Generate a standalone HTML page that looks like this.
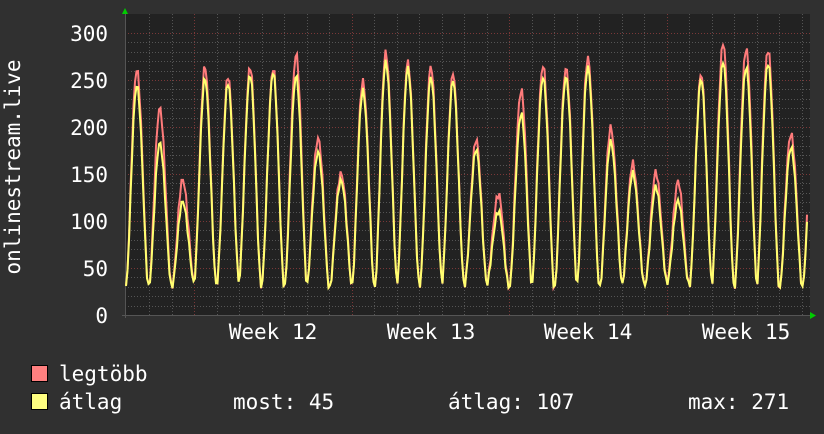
<!DOCTYPE html>
<html><head><meta charset="utf-8"><style>
body{margin:0;background:#303030;width:824px;height:430px;overflow:hidden;font-family:"DejaVu Sans Mono","Liberation Mono",monospace;color:#fff}
svg text{font-family:"DejaVu Sans Mono","Liberation Mono",monospace;fill:#fff}
</style></head><body>
<svg id="s" width="824" height="430" xmlns="http://www.w3.org/2000/svg">
<rect x="0" y="0" width="824" height="430" fill="#303030"/>
<rect x="125" y="14" width="685" height="302" fill="#222"/>
<g id="grid"></g>
<g id="data"></g>
<g font-size="21">
<text x="108" y="41" text-anchor="end">300</text>
<text x="108" y="88" text-anchor="end">250</text>
<text x="108" y="135" text-anchor="end">200</text>
<text x="108" y="182" text-anchor="end">150</text>
<text x="108" y="229" text-anchor="end">100</text>
<text x="108" y="276" text-anchor="end">50</text>
<text x="108" y="323" text-anchor="end">0</text>
<text x="273" y="339" text-anchor="middle">Week 12</text>
<text x="431" y="339" text-anchor="middle">Week 13</text>
<text x="588" y="339" text-anchor="middle">Week 14</text>
<text x="746" y="339" text-anchor="middle">Week 15</text>
<text transform="translate(20,167) rotate(-90)" text-anchor="middle">onlinestream.live</text>
<text x="59" y="381">legtöbb</text>
<text x="59" y="409">átlag</text>
<text x="233" y="409">most: 45</text>
<text x="448" y="409">átlag: 107</text>
<text x="688" y="409">max: 271</text>
</g>
<rect x="31.5" y="365.5" width="16" height="16" fill="#ff8080" stroke="#000"/>
<rect x="31.5" y="393.5" width="16" height="16" fill="#ffff80" stroke="#000"/>
<polygon points="122,14 128,14 125,8" fill="#0c0"/>
<polygon points="810,312 810,319 816,315.5" fill="#0c0"/>
</svg>
<script>
var NS="http://www.w3.org/2000/svg",g=document.getElementById('grid'),d=document.getElementById('data');
function ln(p,x1,y1,x2,y2,c,da){var l=document.createElementNS(NS,'line');l.setAttribute('x1',x1);l.setAttribute('y1',y1);l.setAttribute('x2',x2);l.setAttribute('y2',y2);l.setAttribute('stroke',c);l.setAttribute('stroke-width',1);if(da)l.setAttribute('stroke-dasharray',da);p.appendChild(l);}
for(var v=10;v<=300;v+=10){var y=Math.round(315-v*0.94)+0.5;ln(g,125,y,810,y,v%50?'#555':'#7a3838','1,2');}
for(var x=149;x<810;x+=22.5){var xx=Math.round(x)+0.5;var maj=[194,352,509,667].some(function(m){return Math.abs(m-x)<3});ln(g,xx,14,xx,316,maj?'#7a3838':'#555','1,2');}
ln(g,125.5,14,125.5,318,'#555');ln(g,122,315.5,810,315.5,'#555');
var pk=[[137,245,262],[160,183,220],[183,120,143],[205,250,262],[228,245,252],[250,255,263],[273,258,262],[296,255,278],[318,175,190],[341,145,153],[363,240,250],[386,270,280],[408,262,268],[431,252,263],[453,248,255],[476,175,185],[498,110,128],[521,215,240],[543,255,268],[566,255,265],[588,265,275],[611,185,200],[633,150,160],[656,135,150],[678,120,140],[701,250,255],[723,270,290],[746,265,285],[768,270,285],[791,180,195]];
function val(x,k){var best=null,m=1e9;for(var i=0;i<pk.length;i++){var dd=x-pk[i][0];if(Math.abs(dd)<Math.abs(m)){m=dd;best=pk[i];}}
var ph=Math.cos(2*Math.PI*m/22.5);var f=Math.pow(Math.max(0,(1+ph)/2),0.85);var n=Math.sin(x*1.7)*3+Math.sin(x*0.53)*2;return 30+(best[k]-30)*f+n*(k==2?1.3:1);}
function path(k,c){var s='';for(var x=126;x<=808;x+=1.5){var y=315-val(x,k)*0.94;s+=(s?'L':'M')+x.toFixed(1)+','+y.toFixed(1);}var p=document.createElementNS(NS,'path');p.setAttribute('d',s);p.setAttribute('fill','none');p.setAttribute('stroke',c);p.setAttribute('stroke-width',2);d.appendChild(p);}
path(2,'#ff7b7b');path(1,'#ffff70');
</script>
</body></html>
